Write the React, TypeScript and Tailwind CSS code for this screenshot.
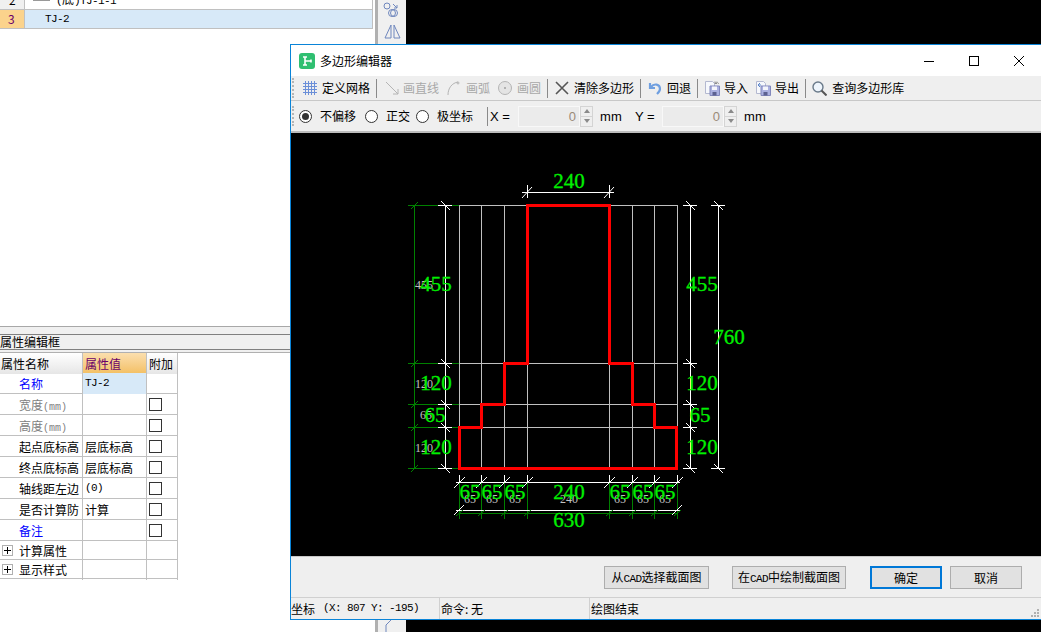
import React from "react";

const gridX = [459, 481, 504, 527, 609, 632, 654, 677];
const gridY = [205, 363, 404, 427, 468];
const outline =
  "527,205 609,205 609,363 632,363 632,404 654,404 654,427 676,427 676,468 459,468 459,427 481,427 481,404 504,404 504,363 527,363";

const greenLabels: [string, number, number][] = [
  ["240", 569, 188],
  ["455", 436, 291],
  ["455", 702, 291],
  ["760", 729, 344],
  ["120", 436, 390],
  ["120", 702, 390],
  ["65", 435, 422],
  ["65", 700, 422],
  ["120", 436, 454],
  ["120", 702, 454],
  ["65", 470, 499],
  ["65", 492, 499],
  ["65", 515, 499],
  ["240", 569, 499],
  ["65", 620, 499],
  ["65", 643, 499],
  ["65", 665, 499],
  ["630", 569, 527],
];

const greyLabels: [string, number, number][] = [
  ["455", 424, 289],
  ["120", 424, 388],
  ["65", 426, 419],
  ["120", 424, 452],
  ["65", 470, 503],
  ["65", 492, 503],
  ["65", 515, 503],
  ["240", 569, 503],
  ["65", 620, 503],
  ["65", 643, 503],
  ["65", 665, 503],
];

function Line({ a, b, c, d, color = "#fff" }: { a: number; b: number; c: number; d: number; color?: string }) {
  return <line x1={a} y1={b} x2={c} y2={d} stroke={color} strokeWidth={1} />;
}

function Drawing() {
  return (
    <svg width={750} height={423} viewBox="291 133 750 423" className="block">
      <g shapeRendering="crispEdges">
        {gridX.map((x) => (
          <Line key={x} a={x + 0.5} b={205} c={x + 0.5} d={468} color="#c0c0c0" />
        ))}
        {gridY.map((y) => (
          <Line key={y} a={459} b={y + 0.5} c={677} d={y + 0.5} color="#c0c0c0" />
        ))}
        <Line a={414.5} b={205} c={414.5} d={468} color="#008000" />
        {gridY.map((y) => (
          <Line key={y} a={408} b={y + 0.5} c={459} d={y + 0.5} color="#008000" />
        ))}
        {gridX.map((x) => (
          <Line key={x} a={x + 0.5} b={482} c={x + 0.5} d={519} color="#008000" />
        ))}
        <Line a={459} b={513.5} c={677} d={513.5} color="#008000" />
        <Line a={445.5} b={205} c={445.5} d={468} />
        <Line a={690.5} b={205} c={690.5} d={468} />
        <Line a={718.5} b={205} c={718.5} d={468} />
        <Line a={522} b={192.5} c={614} d={192.5} />
        <Line a={527.5} b={185} c={527.5} d={198} />
        <Line a={609.5} b={185} c={609.5} d={198} />
        <Line a={456} b={482.5} c={680} d={482.5} />
        <Line a={456} b={510.5} c={680} d={510.5} />
        {gridX.map((x) => (
          <Line key={x} a={x + 0.5} b={475} c={x + 0.5} d={482} />
        ))}
        {gridY.map((y) => (
          <React.Fragment key={y}>
            <Line a={438} b={y + 0.5} c={452} d={y + 0.5} />
            <Line a={683} b={y + 0.5} c={697} d={y + 0.5} />
          </React.Fragment>
        ))}
        <Line a={711} b={205.5} c={725} d={205.5} />
        <Line a={711} b={468.5} c={725} d={468.5} />
      </g>
      {gridY.map((y) => (
        <React.Fragment key={y}>
          <Line a={411} b={y + 4} c={418} d={y - 3} color="#008000" />
          <Line a={441} b={y - 4} c={450} d={y + 5} />
          <Line a={686} b={y - 4} c={695} d={y + 5} />
        </React.Fragment>
      ))}
      <Line a={714} b={201} c={723} d={210} />
      <Line a={714} b={464} c={723} d={473} />
      <Line a={522} b={198} c={532} d={187} />
      <Line a={604} b={198} c={614} d={187} />
      {gridX.map((x) => (
        <React.Fragment key={x}>
          <Line a={x - 5} b={488} c={x + 6} d={477} />
          <Line a={x - 3} b={516} c={x + 4} d={510} color="#008000" />
        </React.Fragment>
      ))}
      <Line a={454} b={515} c={464} d={505} />
      <Line a={672} b={515} c={682} d={505} />
      <g fontFamily="'Liberation Serif', serif">
        {greyLabels.map(([t, x, y], i) => (
          <text key={i} x={x} y={y} fontSize={12} fill="#c0c0c0" textAnchor="middle">
            {t}
          </text>
        ))}
        <polygon points={outline} fill="none" stroke="#ff0000" strokeWidth={3} shapeRendering="crispEdges" />
        {greenLabels.map(([t, x, y], i) => (
          <text key={i} x={x} y={y} fontSize={21} fill="#00f000" stroke="#00f000" strokeWidth={0.3} textAnchor="middle">
            {t}
          </text>
        ))}
      </g>
    </svg>
  );
}

function Sep({ className }: { className: string }) {
  return <div className={`h-[19px] w-px bg-[#8a8a8a] ${className}`} />;
}

function Grip() {
  return <div className="h-[20px] w-[2px] border-l-2 border-dotted border-[#b5b5b5]" />;
}

function GridIcon() {
  return (
    <svg width={14} height={14} viewBox="0 0 14 14" className="ml-[9px]" stroke="#6b8fd8" shapeRendering="crispEdges">
      {[2.5, 5.5, 8.5, 11.5].map((v) => (
        <React.Fragment key={v}>
          <line x1={v} y1={0} x2={v} y2={14} />
          <line x1={0} y1={v} x2={14} y2={v} />
        </React.Fragment>
      ))}
    </svg>
  );
}

function FloppyIcon({ out, className }: { out?: boolean; className: string }) {
  return (
    <svg width={16} height={16} viewBox="0 0 16 16" className={className}>
      <path d="M1.5 1.5h7l2 2v10h-9z" fill="#f6f8fc" stroke="#b4b9d0" />
      <path d="M6 6h9.5v9.5H6z" fill="#aab0e0" stroke="#8288bc" />
      <path d="M8 6.5h5V10H8z" fill="#f4f5fb" />
      <path d="M8.5 12h4v3.5h-4z" fill="#5c6190" />
      {out ? (
        <path d="M3 5h3M3 5l2-2M3 5l2 2" fill="none" stroke="#5d86c9" />
      ) : (
        <path d="M11 3.5c1.5-2 3-1.6 3.5.5M11 1.5v2h2" fill="none" stroke="#8a8a8a" />
      )}
    </svg>
  );
}

function Radio({ on, className }: { on?: boolean; className: string }) {
  return (
    <div className={`flex h-[13px] w-[13px] items-center justify-center rounded-full border border-[#333] bg-white ${className}`}>
      {on && <div className="h-[7px] w-[7px] rounded-full bg-[#333]" />}
    </div>
  );
}

function NumberBox() {
  return (
    <div className="flex h-[21px] items-stretch">
      <div className="w-[62px] border border-[#f8f8f8] bg-[#ebebeb] pr-[3px] text-right font-['Liberation_Sans',sans-serif] text-[13px] leading-[19px] text-[#9a8a78]">
        0
      </div>
      <div className="flex w-[13px] flex-col border border-[#d4d4d4] text-[#8a8a8a]">
        <div className="flex flex-1 items-center justify-center border-b border-[#d4d4d4]">
          <div className="h-0 w-0 border-x-[3px] border-b-[4px] border-x-transparent border-b-[#8a8a8a]" />
        </div>
        <div className="flex flex-1 items-center justify-center">
          <div className="h-0 w-0 border-x-[3px] border-t-[4px] border-x-transparent border-t-[#8a8a8a]" />
        </div>
      </div>
    </div>
  );
}

function DialogButton({ children, className }: { children: React.ReactNode; className: string }) {
  return (
    <button className={`flex h-[23px] items-center justify-center bg-[#e1e1e1] text-xs leading-none text-black ${className}`}>
      <span>{children}</span>
    </button>
  );
}

const Cad = () => <span className="font-['Liberation_Mono',monospace] text-[11px] tracking-[-0.6px]">CAD</span>;

function Checkbox() {
  return <div className="ml-[2px] mt-[4px] h-[13px] w-[13px] border border-[#333] bg-white" />;
}

function PlusBox() {
  return (
    <div className="absolute left-[2px] top-[4px] flex h-[11px] w-[11px] items-center justify-center border border-[#b0b0b0] bg-white">
      <div className="relative h-[7px] w-[7px]">
        <div className="absolute left-0 top-[3px] h-px w-[7px] bg-black" />
        <div className="absolute left-[3px] top-0 h-[7px] w-px bg-black" />
      </div>
    </div>
  );
}

const rows = [
  { name: "名称", color: "text-[#0000ff]", value: "TJ-2", mono: true, selected: true, check: false },
  { name: "宽度", unit: "(mm)", color: "text-[#808080]", value: "", check: true },
  { name: "高度", unit: "(mm)", color: "text-[#808080]", value: "", check: true },
  { name: "起点底标高", color: "text-black", value: "层底标高", check: true },
  { name: "终点底标高", color: "text-black", value: "层底标高", check: true },
  { name: "轴线距左边", color: "text-black", value: "(0)", mono: true, check: true },
  { name: "是否计算防", color: "text-black", value: "计算", check: true },
  { name: "备注", color: "text-[#0000ff]", value: "", check: true },
];

function PropertyTable() {
  return (
    <div className="w-[178px] text-xs leading-[21px]">
      <div className="grid h-[20px] grid-cols-[83px_64px_31px] border-b border-[#c0c0c0]">
        <div className="border-r border-[#c0c0c0] bg-linear-to-b from-white to-[#e6e6e6] pl-px">属性名称</div>
        <div className="border-r border-[#c0c0c0] bg-linear-to-b from-[#fbdfae] to-[#f3bf62] pl-[2px] text-[#6a006a]">属性值</div>
        <div className="border-r border-[#c0c0c0] bg-linear-to-b from-white to-[#e6e6e6] pl-[2px]">附加</div>
      </div>
      {rows.map((r) => (
        <div key={r.name} className="grid h-[21px] grid-cols-[83px_64px_31px] border-b border-[#c0c0c0]">
          <div className={`border-r border-[#c0c0c0] pl-[19px] ${r.color}`}>
            {r.name}
            {r.unit && <span className="font-['Liberation_Mono',monospace] text-[10px]">{r.unit}</span>}
          </div>
          <div
            className={`border-r border-[#c0c0c0] pl-[2px] ${r.selected ? "bg-[#d7e9f8]" : ""} ${
              r.mono ? "font-['Liberation_Mono',monospace] text-[11px] tracking-[-0.6px]" : ""
            }`}
          >
            {r.value}
          </div>
          <div className="border-r border-[#c0c0c0]">{r.check && <Checkbox />}</div>
        </div>
      ))}
      {["计算属性", "显示样式"].map((name) => (
        <div key={name} className="grid h-[19px] grid-cols-[83px_64px_31px] border-b border-[#c0c0c0] leading-[20px]">
          <div className="relative border-r border-[#c0c0c0] pl-[19px]">
            <PlusBox />
            {name}
          </div>
          <div className="border-r border-[#c0c0c0]" />
          <div className="border-r border-[#c0c0c0]" />
        </div>
      ))}
    </div>
  );
}

export default function App() {
  return (
    <div className="relative flex h-[632px] w-[1041px] overflow-hidden bg-black font-['Noto_Sans_CJK_SC',sans-serif] text-black">
      {/* left pane behind the dialog */}
      <div className="flex w-[375px] flex-col bg-white">
        <div className="h-[326px] pr-[2px]">
          <div className="flex h-[10px] overflow-hidden border-b border-[#c0c0c0] border-r text-xs leading-none">
            <div className="-mt-[6px] w-[25px] border-r border-[#c0c0c0] bg-[#f0f0f0] pl-[9px]">2</div>
            <div className="ml-[8px] mr-[6px] h-px w-[17px] bg-[#999]" />
            <div className="-mt-[7px]">
              <span className="font-['Liberation_Mono',monospace] text-[11px] tracking-[-0.6px]">(</span>底
              <span className="font-['Liberation_Mono',monospace] text-[11px] tracking-[-0.6px]">)TJ-1-1</span>
            </div>
          </div>
          <div className="flex h-[19px] border-b border-r border-[#c0c0c0] bg-[#d7e9f8] text-xs leading-[18px]">
            <div className="w-[25px] border-r border-[#c0c0c0] bg-[#fbd38c] pl-[8px] text-[#6a006a]">3</div>
            <div className="ml-[20px] font-['Liberation_Mono',monospace] text-[11px] tracking-[-0.6px]">TJ-2</div>
          </div>
        </div>
        <div className="h-px bg-[#a8a8a8]" />
        <div className="h-[7px] bg-[#f0f0f0]" />
        <div className="h-[16px] overflow-hidden border-y border-[#808080] bg-[#f0f0f0] text-xs leading-[14px]">属性编辑框</div>
        <div className="h-[3px] border-b border-[#b0b0b0] bg-[#f0f0f0]" />
        <PropertyTable />
      </div>
      {/* narrow tool strip */}
      <div className="flex w-[31px] flex-col justify-between border-l-[3px] border-[#b0b0b0] bg-[#f0f0f0]">
        <svg width={28} height={44} viewBox="0 0 28 44" fill="none" stroke="#6f87bd">
          <circle cx={9} cy={6} r={3} />
          <path d="M15 4l4 4M19 5v3h-3" />
          <circle cx={14} cy={13} r={3.5} />
          <circle cx={16} cy={13} r={3.5} />
          <path d="M7 38l6-13v13zM16 38v-13l6 13z" />
        </svg>
        <svg width={28} height={12} viewBox="0 0 28 12" fill="none" stroke="#6f87bd">
          <path d="M8 12V5l5-5" />
        </svg>
      </div>

      {/* dialog window */}
      <div className="absolute left-[290px] top-[44px] flex h-[576px] w-[751px] flex-col border-y border-l border-[#0a84d8] bg-[#efefef]">
        <div className="flex h-[31px] items-center bg-white">
          <svg width={16} height={16} viewBox="0 0 16 16" className="ml-[8px]">
            <rect width={16} height={16} rx={3} fill="#2fbf71" />
            <path d="M4 4h4M6 4v8M4 12h4M6 8h6M12 6.5v3" fill="none" stroke="#fff" strokeWidth={1.6} />
          </svg>
          <span className="ml-[5px] text-xs leading-none">多边形编辑器</span>
          <svg width={12} height={12} viewBox="0 0 12 12" className="ml-[531px]" stroke="#000" fill="none" shapeRendering="crispEdges">
            <line x1={1} y1={6.5} x2={11} y2={6.5} />
          </svg>
          <svg width={12} height={12} viewBox="0 0 12 12" className="ml-[33px]" stroke="#000" fill="none" shapeRendering="crispEdges">
            <rect x={1.5} y={1.5} width={9} height={9} />
          </svg>
          <svg width={12} height={12} viewBox="0 0 12 12" className="ml-[33px]" stroke="#000" fill="none">
            <path d="M1 1l10 10M11 1L1 11" />
          </svg>
        </div>

        {/* first toolbar */}
        <div className="flex h-[25px] items-center border-b border-[#c8c8c8] pl-px text-xs leading-none">
          <Grip />
          <GridIcon />
          <span className="ml-[5px]">定义网格</span>
          <Sep className="ml-[6px]" />
          <svg width={14} height={14} viewBox="0 0 14 14" className="ml-[8px]" fill="none" stroke="#b4b4b4">
            <path d="M1 1l12 12M13 8v5H8" />
          </svg>
          <span className="ml-[4px] text-[#a8a8a8]">画直线</span>
          <svg width={13} height={14} viewBox="0 0 13 14" className="ml-[8px]" fill="none" stroke="#b4b4b4">
            <path d="M1 14C1 7 5 2 11 1" />
            <circle cx={11} cy={2} r={1} />
          </svg>
          <span className="ml-[6px] text-[#a8a8a8]">画弧</span>
          <svg width={14} height={14} viewBox="0 0 14 14" className="ml-[8px]">
            <circle cx={7} cy={7} r={6.5} fill="#e4e4e4" stroke="#b4b4b4" />
            <circle cx={7} cy={7} r={1} fill="#a0a0a0" />
          </svg>
          <span className="ml-[5px] text-[#a8a8a8]">画圆</span>
          <Sep className="ml-[6px]" />
          <svg width={14} height={14} viewBox="0 0 14 14" className="ml-[7px]" fill="none" stroke="#555" strokeWidth={1.6}>
            <path d="M1 1l12 12M13 1L1 13" />
          </svg>
          <span className="ml-[5px]">清除多边形</span>
          <Sep className="ml-[6px]" />
          <svg width={14} height={14} viewBox="0 0 14 14" className="ml-[7px]" fill="none" stroke="#6f9fe0" strokeWidth={2.2}>
            <path d="M2 2v5h5M3 6c3-4 9-3 9 2 0 2-1 3-3 5" />
          </svg>
          <span className="ml-[5px]">回退</span>
          <Sep className="ml-[6px]" />
          <FloppyIcon className="ml-[6px]" />
          <span className="ml-[4px]">导入</span>
          <FloppyIcon out className="ml-[7px]" />
          <span className="ml-[4px]">导出</span>
          <Sep className="ml-[6px]" />
          <svg width={15} height={15} viewBox="0 0 15 15" className="ml-[6px]" fill="none">
            <circle cx={6} cy={6} r={5} fill="#eef5fc" stroke="#6a7a8a" strokeWidth={1.4} />
            <path d="M9.5 9.5l5 5" stroke="#555" strokeWidth={2} />
          </svg>
          <span className="ml-[5px]">查询多边形库</span>
        </div>

        {/* second toolbar */}
        <div className="flex h-[32px] items-center border-b-2 border-[#bcbcbc] pl-px text-xs leading-none">
          <Grip />
          <Radio on className="ml-[5px]" />
          <span className="ml-[8px]">不偏移</span>
          <Radio className="ml-[9px]" />
          <span className="ml-[8px]">正交</span>
          <Radio className="ml-[6px]" />
          <span className="ml-[8px]">极坐标</span>
          <Sep className="ml-[14px]" />
          <span className="ml-[2px] w-[20px] font-['Liberation_Sans',sans-serif] text-[13px]">X =</span>
          <div className="ml-[8px]">
            <NumberBox />
          </div>
          <span className="ml-[7px] w-[22px] font-['Liberation_Sans',sans-serif] text-[13px]">mm</span>
          <span className="ml-[13px] w-[20px] font-['Liberation_Sans',sans-serif] text-[13px]">Y =</span>
          <div className="ml-[7px]">
            <NumberBox />
          </div>
          <span className="ml-[7px] font-['Liberation_Sans',sans-serif] text-[13px]">mm</span>
        </div>

        <div className="h-[423px] flex-none bg-black">
          <Drawing />
        </div>

        {/* buttons */}
        <div className="flex h-[41px] items-start border-t border-[#c8c8c8] pl-[313px] pt-[9px]">
          <DialogButton className="w-[105px] border border-[#adadad]">
            从<Cad />选择截面图
          </DialogButton>
          <DialogButton className="ml-[23px] w-[114px] border border-[#adadad]">
            在<Cad />中绘制截面图
          </DialogButton>
          <DialogButton className="ml-[24px] w-[72px] border-2 border-[#0078d7]">确定</DialogButton>
          <DialogButton className="ml-[8px] w-[72px] border border-[#adadad]">取消</DialogButton>
        </div>

        {/* status bar */}
        <div className="relative flex flex-1 items-center border-t border-[#d0d0d0] text-xs leading-none">
          <div className="flex h-full w-[149px] items-center border-r border-[#d0d0d0]">
            坐标
            <span className="ml-[8px] font-['Liberation_Mono',monospace] text-[11px] tracking-[-0.6px]">(X: 807 Y: -195)</span>
          </div>
          <div className="flex h-full w-[150px] items-center border-r border-[#d0d0d0] pl-px">命令: 无</div>
          <div className="pl-px">绘图结束</div>
          <svg width={10} height={10} viewBox="0 0 10 10" className="absolute bottom-[1px] right-[1px]" fill="#b0b0b0">
            <rect x={7} y={1} width={2} height={2} />
            <rect x={4} y={4} width={2} height={2} />
            <rect x={7} y={4} width={2} height={2} />
            <rect x={1} y={7} width={2} height={2} />
            <rect x={4} y={7} width={2} height={2} />
            <rect x={7} y={7} width={2} height={2} />
          </svg>
        </div>
      </div>
    </div>
  );
}
